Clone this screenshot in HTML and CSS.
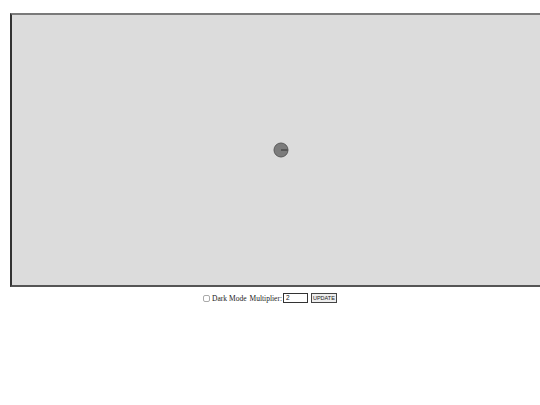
FILE: index.html
```html
<!DOCTYPE html>
<html>
<head>
<meta charset="utf-8">
<link rel="stylesheet" href="styles.css">
</head>
<body>
<div class="page">
  <div class="stage">
    <svg class="dot" width="18" height="18" viewBox="0 0 18 18">
      <circle cx="9" cy="9" r="7" fill="#7c7c7c" stroke="#5a5a5a" stroke-width="1"/>
      <line x1="9" y1="9" x2="15.5" y2="9" stroke="#333" stroke-width="1"/>
    </svg>
  </div>
  <div class="controls">
    <label class="check"><span class="box"></span>Dark Mode</label>
    <span class="label">Multiplier:</span>
    <span class="input">2</span>
    <span class="btn">UPDATE</span>
  </div>
</div>
</body>
</html>
```
FILE: styles.css
```css
html, body { margin: 0; padding: 0; background: #fff; }
.page { width: 540px; overflow: hidden; font-family: "Liberation Serif", serif; }
.stage {
  margin: 13px 0 0 10px;
  width: 538px;
  height: 270px;
  background: #dcdcdc;
  border-top: 2px solid #7a7a7a;
  border-left: 2px solid #333;
  border-bottom: 2px solid #555;
  display: flex;
  align-items: center;
  justify-content: center;
}
.dot { display: block; }
.controls {
  margin-top: 5px;
  display: flex;
  justify-content: center;
  align-items: center;
  gap: 3px;
  font-size: 7.5px;
  color: #222;
  height: 12px;
}
.check { display: flex; align-items: center; gap: 2px; }
.box { width: 5px; height: 5px; border: 1px solid #aaa; border-radius: 2px; background: #fff; }
.input {
  width: 19px; height: 8px; border: 1px solid #333; padding: 0 2px;
  font-family: "Liberation Sans", sans-serif; font-size: 6.5px; line-height: 8px;
  margin-left: -2px;
}
.btn {
  height: 8px; border: 1px solid #444; background: #eee; padding: 0 1px;
  font-family: "Liberation Sans", sans-serif; font-size: 5.5px; line-height: 8px;
}
```
